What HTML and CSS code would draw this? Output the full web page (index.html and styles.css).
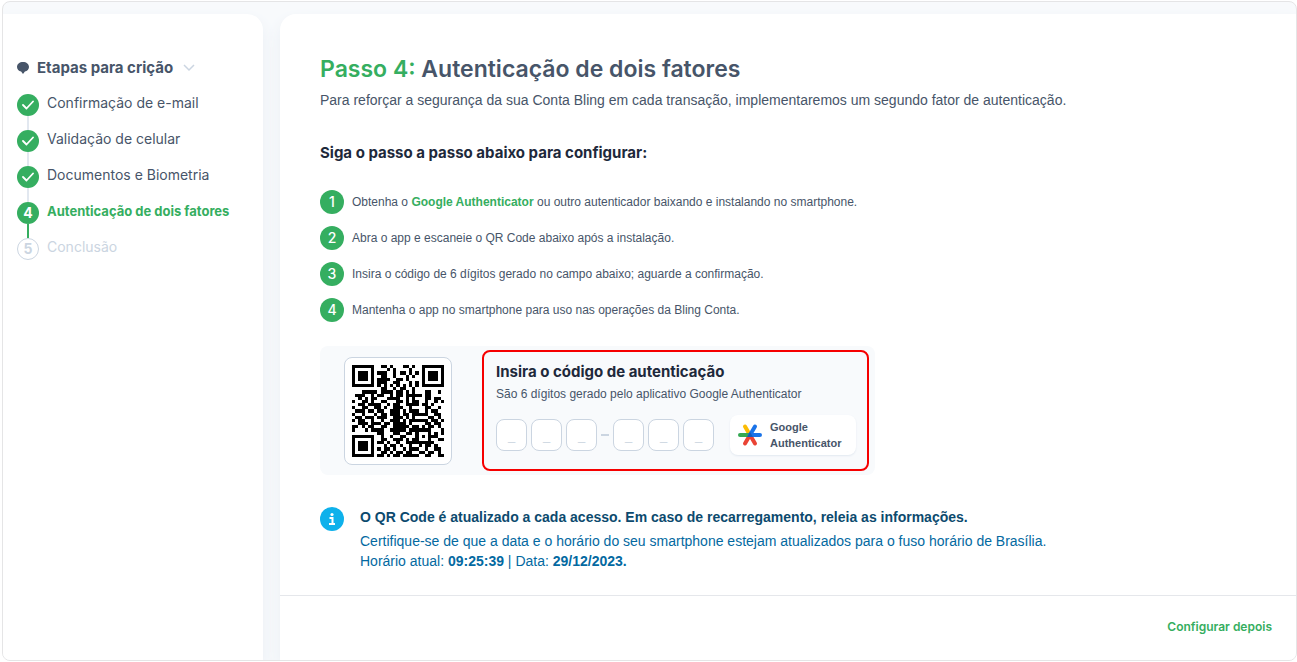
FILE: index.html
```
<!DOCTYPE html>
<html lang="pt-BR">
<head>
  <title>Autenticação de dois fatores</title>
  <meta charset="UTF-8">
  <meta name="viewport" content="width=device-width, initial-scale=1.0">
  <link rel="stylesheet" href="styles.css">
</head>
<body>
  <div class="frame">
    <aside class="sidebar">
      <button class="sidebar__title" type="button">
        <svg width="12" height="12" viewBox="0 0 12 12"><path d="M6 0C2.6 0 0 2.1 0 4.9c0 2.300 1.700 4.100 4.100 4.700L6 12l1.900-2.400C10.300 9 12 7.200 12 4.900 12 2.100 9.400 0 6 0z" fill="#475569"/></svg>
        <span>Etapas para crição</span>
        <svg width="12" height="8" viewBox="0 0 12 8"><path d="M1 1l5 5 5-5" fill="none" stroke="#cbd5e1" stroke-width="1.500"/></svg>
      </button>
      <ol class="steps">
        <li class="step">
          <span class="step__mark"><svg width="12" height="10" viewBox="0 0 12 10"><path d="M1 5l3.500 3.500L11 1.500" fill="none" stroke="#fff" stroke-width="1.800" stroke-linecap="round" stroke-linejoin="round"/></svg></span>
          Confirmação de e-mail
        </li>
        <li class="step">
          <span class="step__mark"><svg width="12" height="10" viewBox="0 0 12 10"><path d="M1 5l3.500 3.500L11 1.500" fill="none" stroke="#fff" stroke-width="1.800" stroke-linecap="round" stroke-linejoin="round"/></svg></span>
          Validação de celular
        </li>
        <li class="step">
          <span class="step__mark"><svg width="12" height="10" viewBox="0 0 12 10"><path d="M1 5l3.500 3.500L11 1.500" fill="none" stroke="#fff" stroke-width="1.800" stroke-linecap="round" stroke-linejoin="round"/></svg></span>
          Documentos e Biometria
        </li>
        <li class="step step--current"><span class="step__mark">4</span>Autenticação de dois fatores</li>
        <li class="step step--next"><span class="step__mark">5</span>Conclusão</li>
      </ol>
    </aside>

    <main class="main">
      <div class="content">
        <h1><span class="green">Passo 4:</span> Autenticação de dois fatores</h1>
        <p class="lead">Para reforçar a segurança da sua Conta Bling em cada transação, implementaremos um segundo fator de autenticação.</p>

        <h2>Siga o passo a passo abaixo para configurar:</h2>
        <ol class="guide">
          <li><span class="guide__number">1</span><p>Obtenha o <a href="#">Google Authenticator</a> ou outro autenticador baixando e instalando no smartphone.</p></li>
          <li><span class="guide__number">2</span><p>Abra o app e escaneie o QR Code abaixo após a instalação.</p></li>
          <li><span class="guide__number">3</span><p>Insira o código de 6 dígitos gerado no campo abaixo; aguarde a confirmação.</p></li>
          <li><span class="guide__number">4</span><p>Mantenha o app no smartphone para uso nas operações da Bling Conta.</p></li>
        </ol>

        <section class="auth">
          <div class="qr"><svg id="qr" width="92" height="92" viewBox="0 0 29 29" shape-rendering="crispEdges" role="img" aria-label="QR Code"></svg></div>
          <div class="code">
            <h3>Insira o código de autenticação</h3>
            <p>São 6 dígitos gerado pelo aplicativo Google Authenticator</p>
            <div class="code__row">
              <div class="digits">
                <input type="text" maxlength="1" placeholder="_" aria-label="Dígito 1">
                <input type="text" maxlength="1" placeholder="_" aria-label="Dígito 2">
                <input type="text" maxlength="1" placeholder="_" aria-label="Dígito 3">
                <span class="dash"></span>
                <input type="text" maxlength="1" placeholder="_" aria-label="Dígito 4">
                <input type="text" maxlength="1" placeholder="_" aria-label="Dígito 5">
                <input type="text" maxlength="1" placeholder="_" aria-label="Dígito 6">
              </div>
              <div class="app">
                <svg width="24" height="24" viewBox="0 0 24 24" fill="none" stroke-width="4" stroke-linecap="round">
                  <path d="M12 12L7 20.500M12 12l5 8.500" stroke="#ea4335"/>
                  <path d="M12 12L7 3.500" stroke="#fbbc04"/>
                  <path d="M12 12H2" stroke="#34a853"/>
                  <path d="M17 3.500L12 12h10" stroke="#1a73e8" stroke-linejoin="round"/>
                  <path d="M12 9l3 5H9z" fill="#185abc"/>
                </svg>
                <span>Google<br>Authenticator</span>
              </div>
            </div>
          </div>
        </section>

        <section class="notice">
          <svg width="24" height="24" viewBox="0 0 24 24"><circle cx="12" cy="12" r="12" fill="#0eb1eb"/><circle cx="12" cy="7.500" r="1.600" fill="#fff"/><path d="M9.500 11H12.500V17M9 17h6" fill="none" stroke="#fff" stroke-width="2"/></svg>
          <div>
            <h4>O QR Code é atualizado a cada acesso. Em caso de recarregamento, releia as informações.</h4>
            <p>Certifique-se de que a data e o horário do seu smartphone estejam atualizados para o fuso horário de Brasília.<br>
            Horário atual: <strong>09:25:39</strong> | Data: <strong>29/12/2023.</strong></p>
          </div>
        </section>
      </div>
      <footer class="footer">
        <button type="button">Configurar depois</button>
      </footer>
    </main>
  </div>
  <script src="script.js"></script>
</body>
</html>
```
FILE: styles.css
```
:root {
  --green: #35ae60;
  --slate-050: #f8fafc;
  --slate-200: #e2e8f0;
  --slate-300: #cbd5e1;
  --slate-600: #475569;
  --slate-800: #1e293b;
  --title-font: Inter, "Open Sans", sans-serif;
}

* {
  box-sizing: border-box;
}

body {
  margin: 0;
  min-height: 100vh;
  display: flex;
  padding: 1px 0 1px 2px;
  background: #fff;
  color: var(--slate-600);
  font-family: "Liberation Sans", Arial, sans-serif;
  font-size: 14px;
  line-height: 20px;
}

h1, h2, h3, h4, p, ol {
  margin: 0;
  padding: 0;
}

ol {
  list-style: none;
}

button {
  border: 0;
  padding: 0;
  background: none;
  cursor: pointer;
}

.frame {
  flex: 1;
  display: flex;
  gap: 17px;
  padding-top: 12px;
  border: 1px solid #e5e5e6;
  border-radius: 8px;
  background: var(--slate-050);
  overflow: hidden;
}

.sidebar {
  flex: 0 0 260px;
  padding: 44px 14px;
  border-radius: 0 16px 0 0;
  background: #fff;
  box-shadow: 0 8px 16px #e9eef4;
  font-family: var(--title-font);
}

.sidebar__title {
  display: flex;
  align-items: center;
  gap: 8px;
  color: var(--slate-600);
  font-family: var(--title-font);
  font-size: 15px;
  font-weight: 700;
  line-height: 20px;
}

.sidebar__title svg:last-child {
  margin-left: 2px;
}

.steps {
  display: flex;
  flex-direction: column;
  gap: 14px;
  margin-top: 14px;
}

.step {
  position: relative;
  display: flex;
  gap: 8px;
  height: 22px;
  line-height: 22px;
}

.step:not(:last-child)::after {
  content: "";
  position: absolute;
  left: 10px;
  top: 24px;
  width: 2px;
  height: 14px;
  background: var(--slate-200);
}

.step__mark {
  display: flex;
  align-items: center;
  justify-content: center;
  flex: 0 0 22px;
  height: 22px;
  margin-top: 2px;
  border-radius: 50%;
  background: var(--green);
  color: #fff;
  font-size: 14px;
  font-weight: 700;
}

.step--current {
  color: var(--green);
  font-size: 13px;
  font-weight: 700;
}

.step--current:not(:last-child)::after {
  background: var(--green);
}

.step--next {
  color: var(--slate-300);
}

.step--next .step__mark {
  border: 1px solid var(--slate-300);
  background: #fff;
  color: var(--slate-300);
}

.main {
  flex: 1;
  display: flex;
  flex-direction: column;
  border-radius: 16px 0 0 0;
  background: #fff;
  box-shadow: 0 8px 16px #e9eef4;
}

.content {
  flex: 1;
  padding: 39px 40px 24px;
}

h1 {
  font-family: var(--title-font);
  font-size: 23px;
  font-weight: 600;
  line-height: 32px;
}

.green {
  color: var(--green);
}

.lead {
  margin-top: 5px;
}

h2 {
  margin-top: 32px;
  color: var(--slate-800);
  font-family: var(--title-font);
  font-size: 15px;
  font-weight: 700;
  line-height: 22px;
}

.guide {
  display: flex;
  flex-direction: column;
  gap: 12px;
  margin-top: 26px;
  font-size: 12px;
}

.guide li {
  display: flex;
  align-items: center;
  gap: 8px;
}

.guide a {
  color: var(--green);
  font-weight: 700;
  text-decoration: none;
}

.guide__number {
  flex: 0 0 24px;
  height: 24px;
  border-radius: 50%;
  background: var(--green);
  color: #fff;
  font-family: var(--title-font);
  font-size: 14px;
  font-weight: 500;
  line-height: 24px;
  text-align: center;
}

.auth {
  display: flex;
  align-items: center;
  gap: 30px;
  width: fit-content;
  margin-top: 24px;
  padding: 4px 6px 4px 24px;
  border-radius: 8px;
  background: var(--slate-050);
}

.qr {
  display: flex;
  padding: 7px;
  border: 1px solid var(--slate-300);
  border-radius: 8px;
  background: #fff;
}

.code {
  padding: 8px 11px 14px 12px;
  border: 2px solid #f60000;
  border-radius: 8px;
}

h3 {
  color: var(--slate-800);
  font-family: var(--title-font);
  font-size: 15px;
  font-weight: 700;
  line-height: 24px;
}

.code p {
  font-size: 12px;
}

.code__row {
  display: flex;
  align-items: center;
  gap: 16px;
  margin-top: 11px;
}

.digits {
  display: flex;
  align-items: center;
  gap: 4px;
}

.digits input {
  width: 31px;
  height: 32px;
  padding: 0;
  border: 1px solid var(--slate-300);
  border-radius: 8px;
  background: #fff;
  color: var(--slate-600);
  font-family: inherit;
  font-size: 13px;
  text-align: center;
}

.digits input::placeholder {
  color: var(--slate-300);
}

.dash {
  width: 8px;
  height: 2px;
  background: var(--slate-300);
}

.app {
  display: flex;
  align-items: center;
  gap: 8px;
  padding: 4px 14px 4px 8px;
  border-radius: 8px;
  background: #fff;
  box-shadow: 0 1px 2px #e2e8f0;
  font-size: 11px;
  font-weight: 700;
  line-height: 16px;
}

.notice {
  display: flex;
  align-items: flex-start;
  gap: 16px;
  margin-top: 32px;
  color: #0369a1;
}

.notice h4 {
  color: #0c4a6e;
  font-size: 14px;
  line-height: 20px;
}

.notice p {
  margin-top: 4px;
}

.footer {
  display: flex;
  justify-content: flex-end;
  padding: 20px 24px 22px;
  border-top: 1px solid #e5e7eb;
}

.footer button {
  color: var(--green);
  font-family: var(--title-font);
  font-size: 12px;
  font-weight: 600;
  line-height: 22px;
}
```
FILE: script.js
```
const rows = [
  '11111110011010001101001111111',
  '10000010000101000010001000001',
  '10111010111001011010101011101',
  '10111010011001000101001011101',
  '10111010111100110100001011101',
  '10000010111001100010101000001',
  '11111110101010101010101111111',
  '00000000011001011001000000000',
  '00011111011110110101000110010',
  '01110010110010110111110110000',
  '00101011000111100101000110110',
  '10011010011000110101100100101',
  '00110111100101100111101101000',
  '10011001101001110010000110010',
  '01110110110011101011100101100',
  '10010001011011101101111100110',
  '01101110111001110101000011010',
  '10110010010011101011111101101',
  '00111011101101111010000110110',
  '11010110011001111101101011010',
  '10001011110011111011111110001',
  '00000000110001100110100010101',
  '11111110010010011000101011100',
  '10000010011001110101100010011',
  '10111010110100100111111111000',
  '10111010001011010010010110100',
  '10111010101101001011100100110',
  '10000010011010110110011011010',
  '11111110110101101111100110011'
];

const qr = document.getElementById('qr');
let path = '';

rows.forEach((row, y) => {
  [...row].forEach((cell, x) => {
    if (cell === '1') path += `M${x} ${y}h1v1h-1z`;
  });
});

qr.innerHTML = `<path d="${path}"/>`;
```
